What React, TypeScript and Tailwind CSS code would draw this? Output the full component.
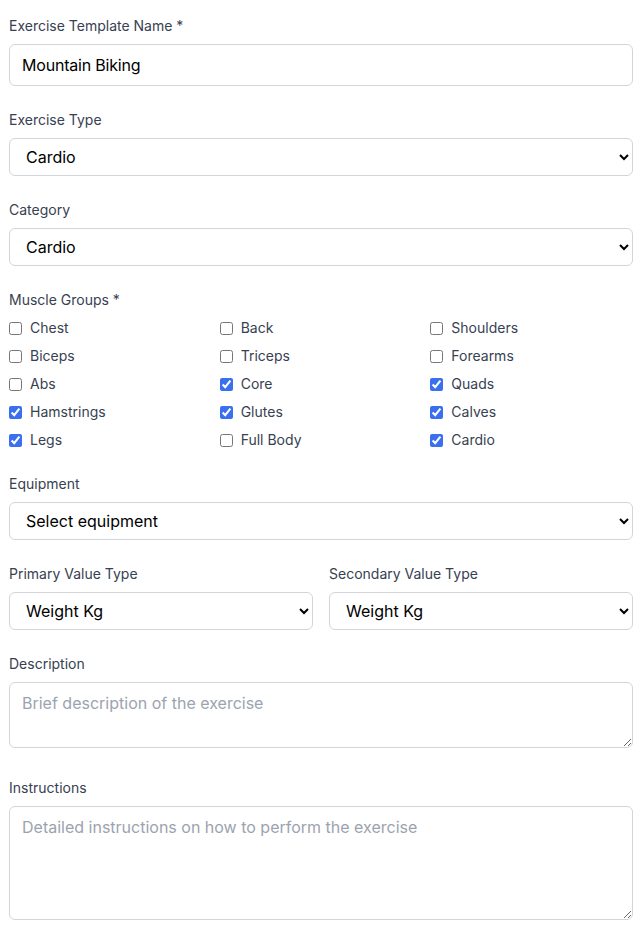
import React from "react";

const muscles: [string, boolean][] = [
  ["Chest", false],
  ["Back", false],
  ["Shoulders", false],
  ["Biceps", false],
  ["Triceps", false],
  ["Forearms", false],
  ["Abs", false],
  ["Core", true],
  ["Quads", true],
  ["Hamstrings", true],
  ["Glutes", true],
  ["Calves", true],
  ["Legs", true],
  ["Full Body", false],
  ["Cardio", true],
];

const labelCls = "block text-sm font-normal text-[#374151] mb-2";
const selectCls =
  "block w-full h-[38px] rounded-md border border-[#d1d5db] bg-white px-3 text-base text-black";

export default function App() {
  return (
    <div className="min-h-[950px] bg-white px-[9px] pt-4 pb-8" style={{ fontFamily: "Inter, 'Noto Sans', sans-serif" }}>
      <div className="flex flex-col gap-6 w-[624px]">
        <div>
          <label className={labelCls}>Exercise Template Name *</label>
          <input
            className="block w-full h-[42px] rounded-md border border-[#d1d5db] bg-white px-3 text-base text-black outline-none tracking-[-0.2px]"
            defaultValue="Mountain Biking"
          />
        </div>
        <div>
          <label className={labelCls}>Exercise Type</label>
          <select className={selectCls} defaultValue="Cardio">
            <option>Cardio</option>
            <option>Strength</option>
          </select>
        </div>
        <div>
          <label className={labelCls}>Category</label>
          <select className={selectCls} defaultValue="Cardio">
            <option>Cardio</option>
            <option>Strength</option>
          </select>
        </div>
        <div>
          <label className={labelCls}>Muscle Groups *</label>
          <div className="grid grid-cols-3 gap-2">
            {muscles.map(([name, checked]) => (
              <label key={name} className="flex items-center h-5 text-sm text-[#374151]">
                <input
                  type="checkbox"
                  defaultChecked={checked}
                  className="m-0 w-[13px] h-[13px] accent-[#3a6ff0]"
                />
                <span className="ml-2">{name}</span>
              </label>
            ))}
          </div>
        </div>
        <div>
          <label className={labelCls}>Equipment</label>
          <select className={selectCls} defaultValue="">
            <option value="">Select equipment</option>
          </select>
        </div>
        <div className="grid grid-cols-2 gap-4">
          <div>
            <label className={labelCls}>Primary Value Type</label>
            <select className={selectCls} defaultValue="Weight Kg">
              <option>Weight Kg</option>
            </select>
          </div>
          <div>
            <label className={labelCls}>Secondary Value Type</label>
            <select className={selectCls} defaultValue="Weight Kg">
              <option>Weight Kg</option>
            </select>
          </div>
        </div>
        <div className="pb-1.5">
          <label className={labelCls}>Description</label>
          <textarea
            className="block w-full h-[66px] rounded-md border border-[#d1d5db] bg-white px-3 py-2 text-base text-black placeholder:text-[#9ca3af] outline-none"
            placeholder="Brief description of the exercise"
          />
        </div>
        <div>
          <label className={labelCls}>Instructions</label>
          <textarea
            className="block w-full h-[114px] rounded-md border border-[#d1d5db] bg-white px-3 py-2 text-base text-black placeholder:text-[#9ca3af] outline-none"
            placeholder="Detailed instructions on how to perform the exercise"
          />
        </div>
      </div>
    </div>
  );
}
